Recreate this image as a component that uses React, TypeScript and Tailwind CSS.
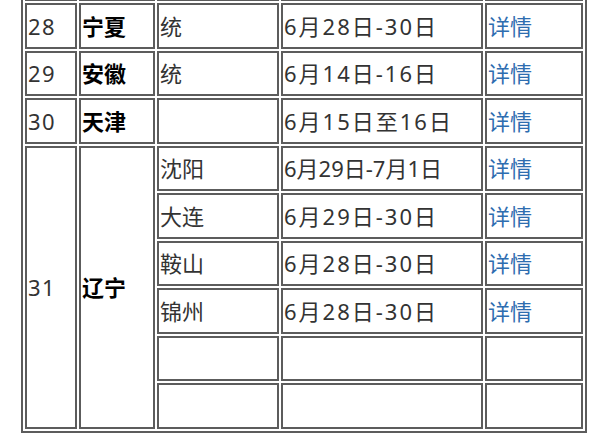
import React from "react";

type Row = { no?: string; prov?: string; span?: number; city: string; date: string; wide?: boolean; link: boolean };

const rows: Row[] = [
  { no: "", prov: "", span: 1, city: "", date: "", link: false },
  { no: "28", prov: "宁夏", span: 1, city: "统", date: "6月28日-30日", wide: true, link: true },
  { no: "29", prov: "安徽", span: 1, city: "统", date: "6月14日-16日", wide: true, link: true },
  { no: "30", prov: "天津", span: 1, city: "", date: "6月15日至16日", wide: true, link: true },
  { no: "31", prov: "辽宁", span: 6, city: "沈阳", date: "6月29日-7月1日", link: true },
  { city: "大连", date: "6月29日-30日", wide: true, link: true },
  { city: "鞍山", date: "6月28日-30日", wide: true, link: true },
  { city: "锦州", date: "6月28日-30日", wide: true, link: true },
  { city: "", date: "", link: false },
  { city: "", date: "", link: false },
];

const cell = "border-2 border-[#5c5c5c] h-[45.5px] p-0 pl-px align-middle whitespace-nowrap";

export default function App() {
  return (
    <div className="w-[610px] h-[438px] overflow-hidden bg-white">
      <table
        className="ml-[21px] mt-[-48.5px] table-fixed border-separate border-spacing-[2px] border-2 border-[#5c5c5c] text-[22px] leading-none text-[#333]"
        style={{ fontFamily: '"Noto Sans", "Noto Sans CJK SC", sans-serif' }}
      >
        <colgroup>
          <col className="w-[52px]" />
          <col className="w-[76px]" />
          <col className="w-[122px]" />
          <col className="w-[202px]" />
          <col className="w-[98px]" />
        </colgroup>
        <tbody>
          {rows.map((r, i) => (
            <tr key={i}>
              {r.no !== undefined && (
                <td rowSpan={r.span} className={cell + " pl-[3px] tracking-[1.5px]"}>
                  {r.no}
                </td>
              )}
              {r.no !== undefined && (
                <td rowSpan={r.span} className={cell + " font-bold text-black"}>
                  {r.prov}
                </td>
              )}
              <td className={cell}>{r.city}</td>
              <td className={cell + (r.wide ? " tracking-[2px]" : " tracking-[0px]")}>{r.date}</td>
              <td className={cell}>
                {r.link ? <a className="text-[#2e6db0]">详情</a> : null}
              </td>
            </tr>
          ))}
        </tbody>
      </table>
    </div>
  );
}
